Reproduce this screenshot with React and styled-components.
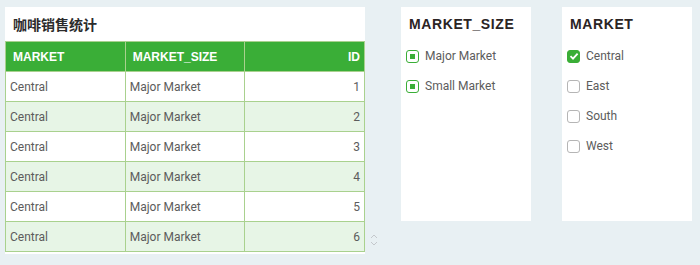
import styled, { createGlobalStyle } from 'styled-components';

const GlobalStyle = createGlobalStyle`
  html, body {
    margin: 0;
    padding: 0;
    background: #e8f0f3;
  }

  body {
    font-family: Roboto, "Liberation Sans", "Noto Sans CJK SC", sans-serif;
  }
`;

const Page = styled.div`
  display: flex;
  align-items: flex-start;
  width: 700px;
  height: 265px;
  padding: 7px 0 0 5px;
  box-sizing: border-box;
`;

const TableWrap = styled.div`
  display: flex;
  align-items: flex-end;
  gap: 4px;
  margin-right: 22px;
`;

const Panel = styled.section`
  background: #ffffff;
  width: ${(props) => props.width}px;
  height: ${(props) => props.height}px;
  margin-right: ${(props) => props.gap || 0}px;
  box-sizing: border-box;
`;

const TableTitle = styled.h2`
  margin: 0;
  height: 34px;
  padding-left: 8px;
  display: flex;
  align-items: center;
  font-size: 14px;
  font-weight: 700;
  color: #2b2b2b;
  font-family: "Liberation Sans", "Noto Sans CJK SC", sans-serif;
`;

const Table = styled.table`
  width: 100%;
  border-collapse: collapse;
  table-layout: fixed;
  font-size: 12px;

  th, td {
    height: 30px;
    padding: 0 4px;
    box-sizing: border-box;
    border: 1px solid #a9d18e;
    text-align: left;
    white-space: nowrap;
  }

  th {
    background: #3aae37;
    color: #ffffff;
    font-weight: 700;
    padding-left: 7px;
    font-family: "Liberation Sans", sans-serif;
  }

  th:last-child, td:last-child {
    text-align: right;
    padding-right: 4px;
  }

  td {
    color: #5c5c5c;
  }
`;

const Row = styled.tr`
  background: ${(props) => (props.striped ? '#e7f5e6' : '#ffffff')};
`;

const Scroller = styled.svg`
  display: block;
  margin-bottom: 7px;
`;

const FilterTitle = styled.h3`
  margin: 0;
  height: 34px;
  padding-left: 8px;
  display: flex;
  align-items: center;
  font-size: 14px;
  font-weight: 700;
  letter-spacing: 0.6px;
  color: #2b2424;
  font-family: "Liberation Sans", sans-serif;
`;

const Options = styled.ul`
  list-style: none;
  margin: 0;
  padding: 0 0 0 5px;
`;

const Option = styled.li`
  display: flex;
  align-items: center;
  gap: 6px;
  height: 30px;
  font-size: 12px;
  color: #5c5c5c;
`;

const Box = styled.span`
  width: 13px;
  height: 13px;
  box-sizing: border-box;
  border-radius: 3px;
  border: 1px solid ${(props) => (props.state === 'none' ? '#b5b5b5' : '#3aae37')};
  background: ${(props) => (props.state === 'checked' ? '#3aae37' : '#ffffff')};
  display: flex;
  align-items: center;
  justify-content: center;

  &::after {
    content: '';
    display: ${(props) => (props.state === 'partial' ? 'block' : 'none')};
    width: 5px;
    height: 5px;
    background: #3aae37;
  }
`;

const rows = [1, 2, 3, 4, 5, 6];

function CheckBox({ state }) {
  return (
    <Box state={state}>
      {state === 'checked' && (
        <svg width="10" height="10" viewBox="0 0 10 10">
          <path d="M1.5 5.2 L4 7.6 L8.6 2.6" fill="none" stroke="#ffffff" strokeWidth="1.8" />
        </svg>
      )}
    </Box>
  );
}

export default function App() {
  return (
    <>
      <GlobalStyle />
      <Page>
        <TableWrap>
          <Panel width={360} height={247}>
            <TableTitle>咖啡销售统计</TableTitle>
            <Table>
              <thead>
                <tr>
                  <th>MARKET</th>
                  <th>MARKET_SIZE</th>
                  <th>ID</th>
                </tr>
              </thead>
              <tbody>
                {rows.map((id) => (
                  <Row key={id} striped={id % 2 === 0}>
                    <td>Central</td>
                    <td>Major Market</td>
                    <td>{id}</td>
                  </Row>
                ))}
              </tbody>
            </Table>
          </Panel>
          <Scroller width="10" height="14" viewBox="0 0 10 14">
            <path d="M2 5 L5 2 L8 5" fill="none" stroke="#c4c8cc" strokeWidth="1" />
            <path d="M2 9 L5 12 L8 9" fill="none" stroke="#c4c8cc" strokeWidth="1" />
          </Scroller>
        </TableWrap>
        <Panel width={130} height={214} gap={31}>
          <FilterTitle>MARKET_SIZE</FilterTitle>
          <Options>
            <Option><CheckBox state="partial" />Major Market</Option>
            <Option><CheckBox state="partial" />Small Market</Option>
          </Options>
        </Panel>
        <Panel width={130} height={214}>
          <FilterTitle>MARKET</FilterTitle>
          <Options>
            <Option><CheckBox state="checked" />Central</Option>
            <Option><CheckBox state="none" />East</Option>
            <Option><CheckBox state="none" />South</Option>
            <Option><CheckBox state="none" />West</Option>
          </Options>
        </Panel>
      </Page>
    </>
  );
}
